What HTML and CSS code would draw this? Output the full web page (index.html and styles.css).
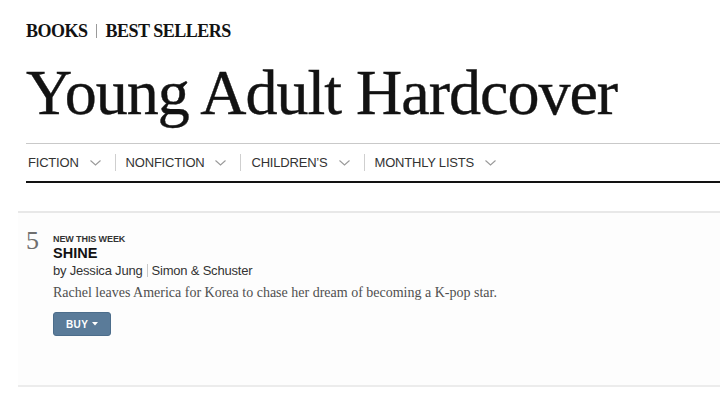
FILE: index.html
```html
<!DOCTYPE html>
<html lang="en">
<head>
<meta charset="utf-8">
<title>Young Adult Hardcover</title>
<link rel="stylesheet" href="styles.css">
</head>
<body>
<main class="page">
  <header class="head">
    <div class="kicker"><span>BOOKS</span><span class="kicker-sep"></span><span>BEST SELLERS</span></div>
    <h1 class="title">Young Adult Hardcover</h1>
    <nav class="nav">
      <span class="nav-item">FICTION<svg class="chev" width="11" height="6" viewBox="0 0 11 6"><path d="M0.5 0.5 L5.5 5 L10.5 0.5" fill="none" stroke="#9a9a9a" stroke-width="1.1"/></svg></span>
      <span class="nav-sep"></span>
      <span class="nav-item">NONFICTION<svg class="chev" width="11" height="6" viewBox="0 0 11 6"><path d="M0.5 0.5 L5.5 5 L10.5 0.5" fill="none" stroke="#9a9a9a" stroke-width="1.1"/></svg></span>
      <span class="nav-sep"></span>
      <span class="nav-item">CHILDREN’S<svg class="chev" width="11" height="6" viewBox="0 0 11 6"><path d="M0.5 0.5 L5.5 5 L10.5 0.5" fill="none" stroke="#9a9a9a" stroke-width="1.1"/></svg></span>
      <span class="nav-sep"></span>
      <span class="nav-item">MONTHLY LISTS<svg class="chev" width="11" height="6" viewBox="0 0 11 6"><path d="M0.5 0.5 L5.5 5 L10.5 0.5" fill="none" stroke="#9a9a9a" stroke-width="1.1"/></svg></span>
    </nav>
  </header>
  <section class="list">
    <article class="book">
      <div class="rank">5</div>
      <div class="info">
        <div class="label">NEW THIS WEEK</div>
        <h2 class="book-title">SHINE</h2>
        <div class="byline"><span>by Jessica Jung</span><span class="by-sep"></span><span>Simon &amp; Schuster</span></div>
        <p class="desc">Rachel leaves America for Korea to chase her dream of becoming a K-pop star.</p>
        <button class="buy">BUY<svg class="caret" width="6" height="4" viewBox="0 0 6 4"><path d="M0 0 H6 L3 3.5 Z" fill="#fff"/></svg></button>
      </div>
    </article>
  </section>
</main>
</body>
</html>
```
FILE: styles.css
```css
* { box-sizing: border-box; }
html, body { margin: 0; padding: 0; background: #fff; }
body { width: 720px; height: 400px; overflow: hidden; color: #121212; }

.page { display: flex; flex-direction: column; }

.head { padding-left: 26px; display: flex; flex-direction: column; }

.kicker {
  margin-top: 22px;
  display: flex;
  align-items: center;
  font-family: "Liberation Serif", "Times New Roman", serif;
  font-weight: 700;
  font-size: 18px;
  line-height: 18px;
  letter-spacing: -0.5px;
  color: #121212;
}
.kicker-sep {
  display: inline-block;
  width: 0;
  height: 14px;
  border-left: 1px solid #9a9a9a;
  margin: 0 9px 0 8px;
}

.title {
  margin: 21px 0 0 0;
  font-family: "Liberation Serif", "Times New Roman", serif;
  font-weight: 400;
  font-size: 64px;
  line-height: 64px;
  letter-spacing: -1px;
  color: #121212;
  -webkit-text-stroke: 0.4px #121212;
}

.nav {
  margin-top: 18px;
  display: flex;
  align-items: center;
  height: 40px;
  border-top: 1px solid #c9c9c9;
  border-bottom: 2px solid #121212;
  padding-left: 2px;
  font-family: "Liberation Sans", Arial, sans-serif;
  font-size: 13px;
  letter-spacing: -0.2px;
  color: #333;
}
.nav-item { display: flex; align-items: center; }
.chev { margin-left: 11px; margin-right: 14px; }
.nav-sep {
  width: 0;
  height: 17px;
  border-left: 1px solid #cfcfcf;
  margin-right: 10px;
}

.list { margin-top: 28px; margin-left: 18px; }

.book {
  display: flex;
  border-top: 2px solid #e8e8e8;
  border-bottom: 2px solid #ececec;
  padding: 20px 0 49px 8px;
  background: #fdfdfd;
}

.rank {
  width: 27px;
  flex: none;
  font-family: "Liberation Serif", "Times New Roman", serif;
  font-size: 26px;
  line-height: 16px;
  color: #6f6f6f;
}

.info { display: flex; flex-direction: column; align-items: flex-start; }

.label {
  font-family: "Liberation Sans", Arial, sans-serif;
  font-size: 9px;
  font-weight: 700;
  line-height: 12px;
  color: #333;
  letter-spacing: -0.1px;
}

.book-title {
  margin: 0;
  font-family: "Liberation Sans", Arial, sans-serif;
  font-size: 14.5px;
  font-weight: 700;
  line-height: 17px;
  color: #121212;
}

.byline {
  display: flex;
  align-items: center;
  font-family: "Liberation Sans", Arial, sans-serif;
  font-size: 13px;
  line-height: 17px;
  color: #333;
  letter-spacing: -0.2px;
}
.by-sep {
  width: 0;
  height: 13px;
  border-left: 1px solid #c9c9c9;
  margin: 0 4px;
}

.desc {
  margin: 4px 0 0 0;
  font-family: "Liberation Serif", "Times New Roman", serif;
  font-size: 14px;
  line-height: 20px;
  color: #4f4f4f;
}

.buy {
  margin-top: 9px;
  display: flex;
  align-items: center;
  height: 24px;
  padding: 0 12px;
  border: 1px solid #4c6d8b;
  border-radius: 3px;
  background: #5a7b99;
  color: #fff;
  font-family: "Liberation Sans", Arial, sans-serif;
  font-size: 10px;
  font-weight: 700;
  letter-spacing: 0.4px;
}
.caret { margin-left: 4px; }
```
